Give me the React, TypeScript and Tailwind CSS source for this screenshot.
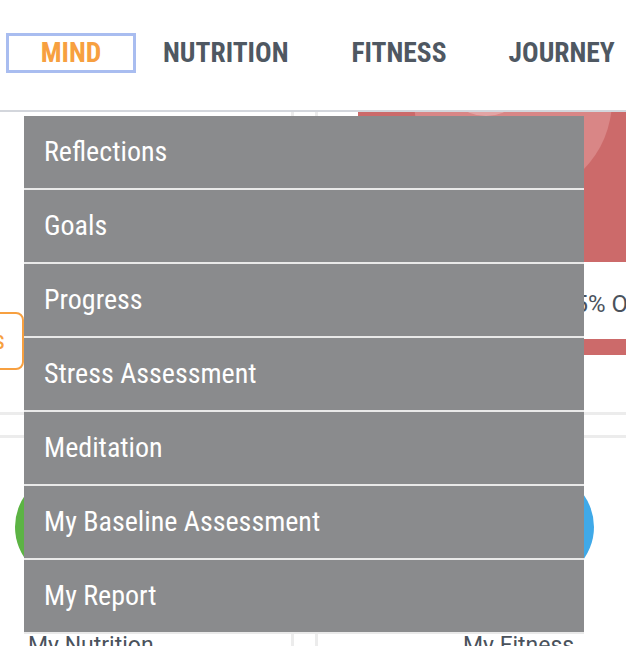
import React from "react";

const menuItems = [
  "Reflections",
  "Goals",
  "Progress",
  "Stress Assessment",
  "Meditation",
  "My Baseline Assessment",
  "My Report",
];

const NavItem: React.FC<{ label: string; className?: string }> = ({
  label,
  className,
}) => {
  return (
    <div
      className={`h-[40px] flex items-center font-bold text-[27.5px] text-[#4f5862] font-['Roboto_Condensed',Roboto,sans-serif] font-stretch-condensed ${className ?? ""}`}
    >
      {label}
    </div>
  );
};

const DropdownMenu: React.FC = () => {
  return (
    <div className="absolute left-[24px] top-[116px] w-[560px] flex flex-col">
      {menuItems.map((item) => (
        <div
          key={item}
          className="h-[74px] bg-[#8a8b8d] border-b-2 border-[#e9e9e9] flex items-center pl-[20px] text-white text-[28px] font-['Roboto_Condensed',Roboto,sans-serif] font-stretch-condensed"
        >
          {item}
        </div>
      ))}
    </div>
  );
};

export default function App() {
  return (
    <div className="relative w-[626px] h-[646px] overflow-hidden bg-white font-['Roboto',sans-serif]">
      <header className="h-[112px] border-b-2 border-[#d3d6dc] flex items-start pt-[33px] pl-[6px]">
        <div className="w-[130px] h-[40px] border-[3px] border-[#a9bdf0] flex items-center justify-center font-bold text-[27.5px] text-[#f7a040] font-['Roboto_Condensed',Roboto,sans-serif] font-stretch-condensed">
          MIND
        </div>
        <NavItem label="NUTRITION" className="ml-[27px]" />
        <NavItem label="FITNESS" className="ml-[63px]" />
        <NavItem label="JOURNEY" className="ml-[62px] whitespace-nowrap" />
      </header>

      <div className="grid grid-cols-[294px_332px] gap-x-[21px] gap-y-[20px]">
        {/* row 1, left card */}
        <div className="h-[303px] border-r-[3px] border-b-[3px] border-[#ececec] flex flex-col">
          <div className="mt-[200px] flex">
            <div className="-ml-[64px] w-[88px] h-[58px] border-2 border-[#f7a040] rounded-lg flex items-center justify-end pr-[17px] text-[25px] text-[#f7a040] font-['Roboto_Condensed',Roboto,sans-serif] font-stretch-condensed">
              Goals
            </div>
          </div>
        </div>

        {/* row 1, right card */}
        <div className="h-[303px] border-l-[3px] border-b-[3px] border-[#ececec] overflow-hidden flex flex-col">
          <div className="ml-[40px] h-[150px] w-[300px] shrink-0 bg-[#cc6a6a] relative overflow-hidden">
            <svg width="300" height="150" className="absolute inset-0">
              <circle cx="155" cy="-12" r="99" fill="#d98686" />
              <circle cx="128" cy="-40" r="44" fill="#eab9b9" opacity="0.6" />
            </svg>
          </div>
          <div className="mt-[28px] ml-[243px] h-[28px] leading-[28px] shrink-0 whitespace-nowrap text-[24px] text-[#4a525c]">
            25% OF GOAL
          </div>
          <div className="mt-[21px] ml-[200px] h-[16px] w-[200px] shrink-0 bg-[#cc6a6a]" />
        </div>

        {/* row 2, left card */}
        <div className="h-[240px] border-r-[3px] border-t-[3px] border-[#ececec] flex flex-col">
          <div className="mt-[34px] ml-[15px] w-[110px] h-[110px] rounded-full bg-[#5cb344]" />
          <div className="mt-[47px] ml-[28px] whitespace-nowrap text-[23px] text-[#4a525c]">
            My Nutrition
          </div>
        </div>

        {/* row 2, right card */}
        <div className="h-[240px] border-l-[3px] border-t-[3px] border-[#ececec] flex flex-col">
          <div className="mt-[34px] ml-[166px] w-[110px] h-[110px] rounded-full bg-[#3fa9e8]" />
          <div className="mt-[47px] ml-[145px] whitespace-nowrap text-[23px] text-[#4a525c]">
            My Fitness
          </div>
        </div>
      </div>

      <DropdownMenu />
    </div>
  );
}
